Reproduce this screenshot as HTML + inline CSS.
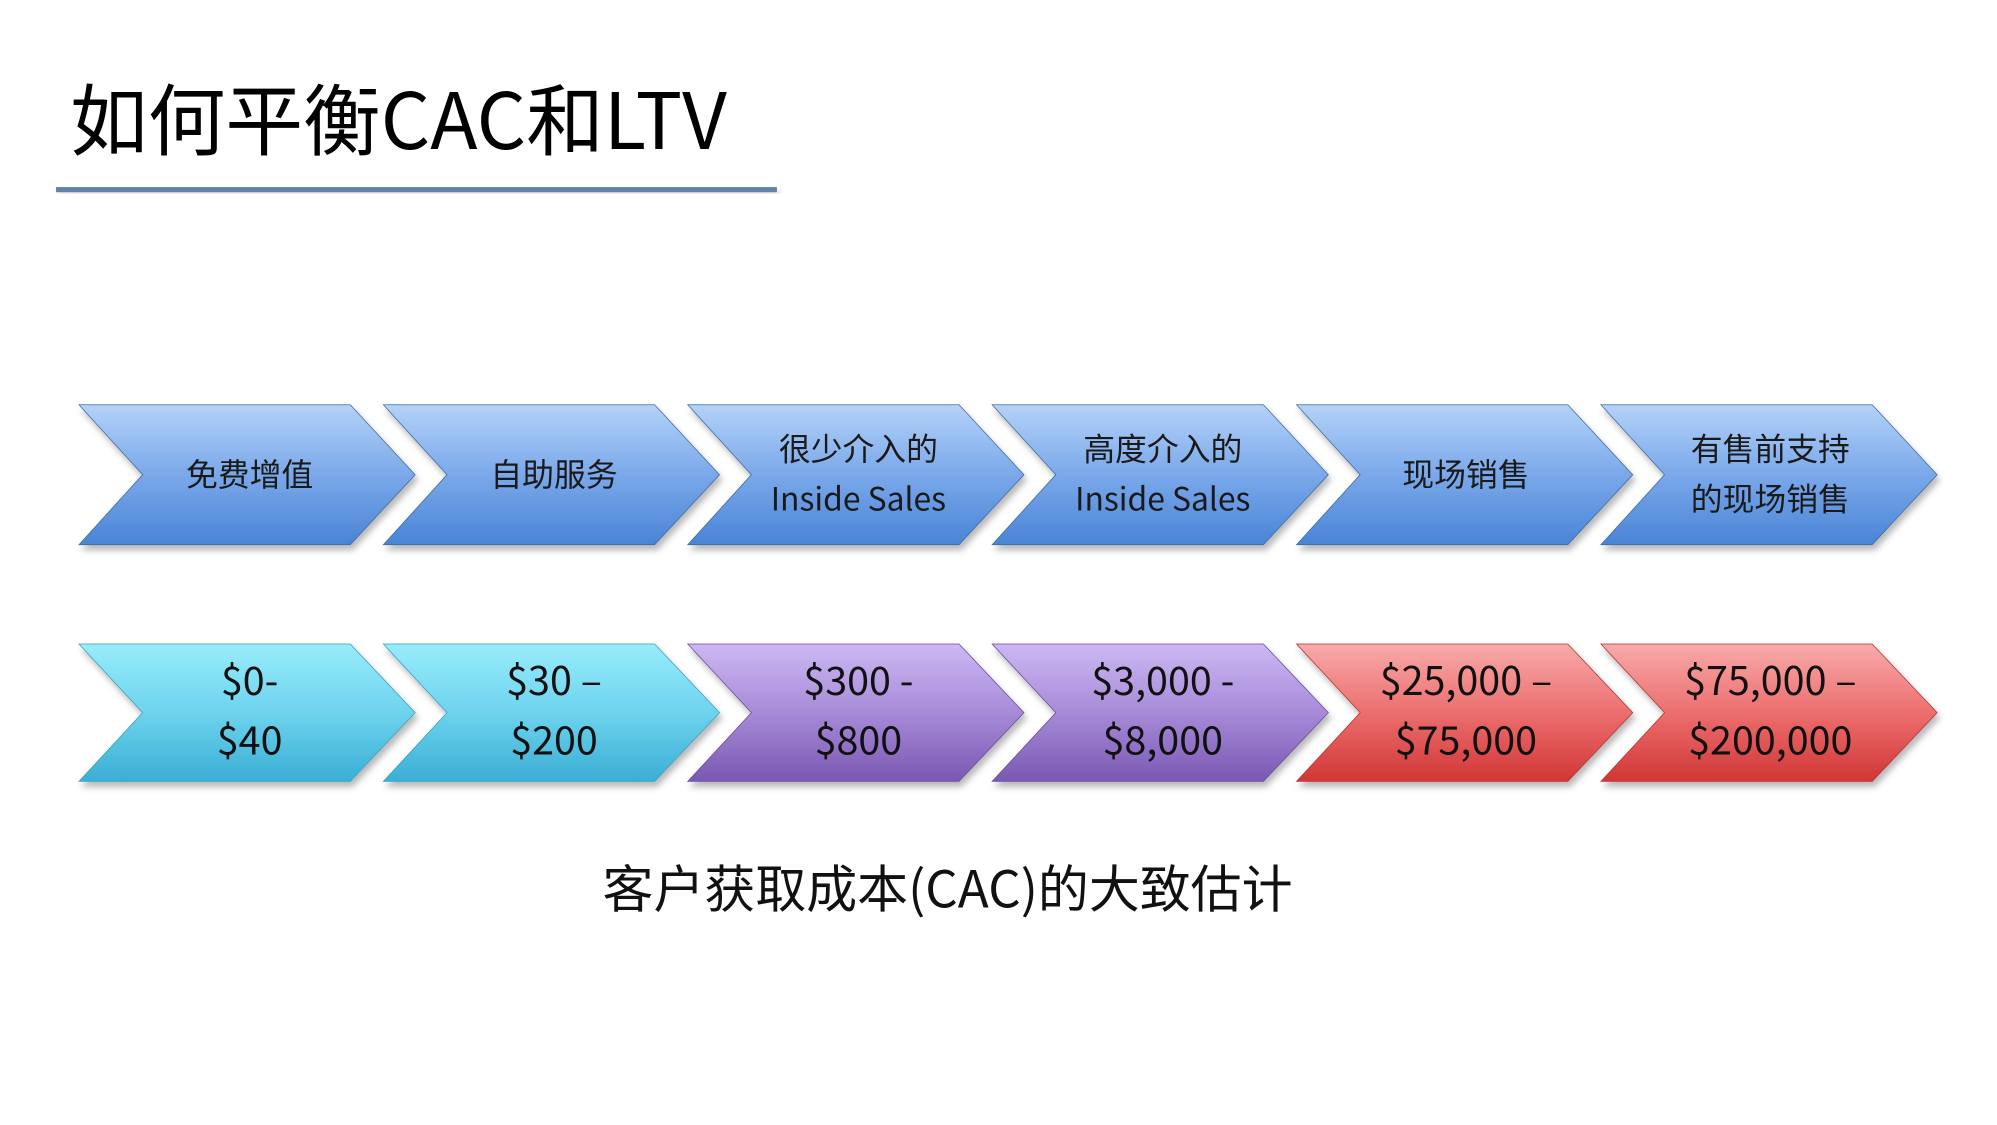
<!DOCTYPE html>
<html><head><meta charset="utf-8"><style>
html,body{margin:0;padding:0;background:#fff;width:1997px;height:1125px;overflow:hidden}
svg{display:block}
text{font-family:"Liberation Sans","Noto Sans CJK SC",sans-serif}
.cj{font-family:"Noto Sans CJK SC","Liberation Sans",sans-serif}
</style></head><body>
<svg width="1997" height="1125" viewBox="0 0 1568 884" preserveAspectRatio="none" xmlns="http://www.w3.org/2000/svg">
<defs>
<linearGradient id="b" x1="0" y1="0" x2="0" y2="1"><stop offset="0" stop-color="#b4d2f8"/><stop offset=".5" stop-color="#7aa8ea"/><stop offset="1" stop-color="#4a84d6"/></linearGradient>
<linearGradient id="c" x1="0" y1="0" x2="0" y2="1"><stop offset="0" stop-color="#98ecfb"/><stop offset=".5" stop-color="#6dd3ee"/><stop offset="1" stop-color="#3aaed4"/></linearGradient>
<linearGradient id="p" x1="0" y1="0" x2="0" y2="1"><stop offset="0" stop-color="#cdb8f2"/><stop offset=".5" stop-color="#a68ad8"/><stop offset="1" stop-color="#7a58b2"/></linearGradient>
<linearGradient id="r" x1="0" y1="0" x2="0" y2="1"><stop offset="0" stop-color="#f8aaaa"/><stop offset=".5" stop-color="#ec6e6e"/><stop offset="1" stop-color="#d13636"/></linearGradient>
<filter id="sh" x="-5%" y="-5%" width="115%" height="125%"><feDropShadow dx="2" dy="4" stdDeviation="2.5" flood-color="#000" flood-opacity=".28"/></filter>
</defs>
<text class="cj" x="55" y="117" font-size="61" fill="#000">如何平衡CAC和LTV</text>
<rect x="44" y="147" width="566" height="4" fill="#5f83ad" filter="url(#sh)"/>
<g filter="url(#sh)" stroke="#3f6aa8" stroke-width=".6">
<polygon points="62,318 275,318 326,373 275,428 62,428 112,373" fill="url(#b)"/>
<polygon points="301,318 514,318 565,373 514,428 301,428 351,373" fill="url(#b)"/>
<polygon points="540,318 753,318 804,373 753,428 540,428 590,373" fill="url(#b)"/>
<polygon points="779,318 992,318 1043,373 992,428 779,428 829,373" fill="url(#b)"/>
<polygon points="1018,318 1231,318 1282,373 1231,428 1018,428 1068,373" fill="url(#b)"/>
<polygon points="1257,318 1470,318 1521,373 1470,428 1257,428 1307,373" fill="url(#b)"/>
</g>
<g filter="url(#sh)" stroke-width=".6">
<polygon points="62,506 275,506 326,560 275,614 62,614 112,560" fill="url(#c)" stroke="#3a9ec0"/>
<polygon points="301,506 514,506 565,560 514,614 301,614 351,560" fill="url(#c)" stroke="#3a9ec0"/>
<polygon points="540,506 753,506 804,560 753,614 540,614 590,560" fill="url(#p)" stroke="#6a4aa0"/>
<polygon points="779,506 992,506 1043,560 992,614 779,614 829,560" fill="url(#p)" stroke="#6a4aa0"/>
<polygon points="1018,506 1231,506 1282,560 1231,614 1018,614 1068,560" fill="url(#r)" stroke="#b83030"/>
<polygon points="1257,506 1470,506 1521,560 1470,614 1257,614 1307,560" fill="url(#r)" stroke="#b83030"/>
</g>
<g class="cj" font-size="25" fill="#1a1a1a" text-anchor="middle">
<text class="cj" x="196" y="382">免费增值</text>
<text class="cj" x="435" y="382">自助服务</text>
<text class="cj" x="674" y="362">很少介入的</text>
<text class="cj" x="674" y="401">Inside Sales</text>
<text class="cj" x="913" y="362">高度介入的</text>
<text class="cj" x="913" y="401">Inside Sales</text>
<text class="cj" x="1151" y="382">现场销售</text>
<text class="cj" x="1390" y="362">有售前支持</text>
<text class="cj" x="1390" y="401">的现场销售</text>
</g>
<g font-size="31" fill="#111" text-anchor="middle" class="cj">
<text class="cj" x="196" y="546">$0-</text><text class="cj" x="196" y="593">$40</text>
<text class="cj" x="435" y="546">$30 –</text><text class="cj" x="435" y="593">$200</text>
<text class="cj" x="674" y="546">$300 -</text><text class="cj" x="674" y="593">$800</text>
<text class="cj" x="913" y="546">$3,000 -</text><text class="cj" x="913" y="593">$8,000</text>
<text class="cj" x="1151" y="546">$25,000 –</text><text class="cj" x="1151" y="593">$75,000</text>
<text class="cj" x="1390" y="546">$75,000 –</text><text class="cj" x="1390" y="593">$200,000</text>
</g>
<text class="cj" x="744" y="713" font-size="40" fill="#111" text-anchor="middle">客户获取成本(CAC)的大致估计</text>
</svg>
</body></html>
